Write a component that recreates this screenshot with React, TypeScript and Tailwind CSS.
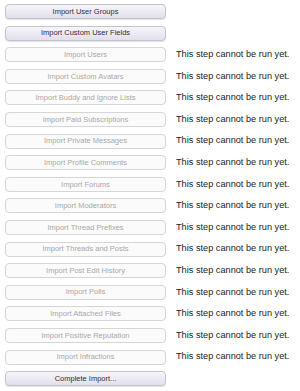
const steps: { label: string; enabled: boolean }[] = [
  { label: "Import User Groups", enabled: true },
  { label: "Import Custom User Fields", enabled: true },
  { label: "Import Users", enabled: false },
  { label: "Import Custom Avatars", enabled: false },
  { label: "Import Buddy and Ignore Lists", enabled: false },
  { label: "Import Paid Subscriptions", enabled: false },
  { label: "Import Private Messages", enabled: false },
  { label: "Import Profile Comments", enabled: false },
  { label: "Import Forums", enabled: false },
  { label: "Import Moderators", enabled: false },
  { label: "Import Thread Prefixes", enabled: false },
  { label: "Import Threads and Posts", enabled: false },
  { label: "Import Post Edit History", enabled: false },
  { label: "Import Polls", enabled: false },
  { label: "Import Attached Files", enabled: false },
  { label: "Import Positive Reputation", enabled: false },
  { label: "Import Infractions", enabled: false },
  { label: "Complete Import...", enabled: true },
];

export default function App() {
  return (
    <div className="w-[300px] h-[391px] bg-white pl-[5px] pt-[4px] font-['Liberation_Sans',Arial,sans-serif] flex flex-col gap-[6.6px]">
      {steps.map((step, i) => {
        const last = i === steps.length - 1;
        return (
          <div key={step.label} className="flex items-center h-[15px]">
            <button
              disabled={!step.enabled}
              className={`w-[161px] h-[15px] shrink-0 rounded-[4px] border text-[7.5px] leading-none flex items-center justify-center ${
                step.enabled
                  ? "bg-gradient-to-b from-[#f7f6fa] to-[#e1dfeb] border-[#c4c3cc] text-[#3a2a33] shadow-[0_1px_1px_rgba(0,0,0,0.12)]"
                  : "bg-[#fbfbfb] border-[#d6d6d6] text-[#a8a8a8]"
              }`}
            >
              {step.label}
            </button>
            {!step.enabled && !last && (
              <span className="ml-[10px] text-[9.2px] leading-none text-[#222] whitespace-nowrap">
                This step cannot be run yet.
              </span>
            )}
          </div>
        );
      })}
    </div>
  );
}
